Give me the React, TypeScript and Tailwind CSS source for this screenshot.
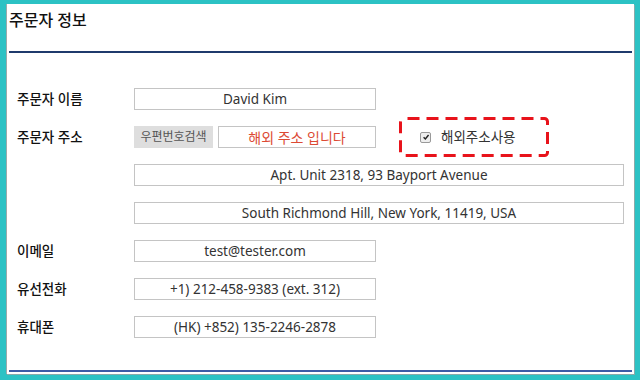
const font = { fontFamily: '"Noto Sans", "Noto Sans CJK KR", sans-serif' };

function Field({ value, className = '' }: { value: string; className?: string }) {
  return (
    <div
      className={`flex h-[22px] items-center justify-center border border-[#c4c4c4] bg-white text-[13.5px] text-[#333] ${className}`}
    >
      {value}
    </div>
  );
}

function Row({ label, children }: { label?: string; children: React.ReactNode }) {
  return (
    <div className="flex h-[22px] items-center">
      <div className="w-[117px] text-[13.5px] font-medium text-[#111]">{label}</div>
      {children}
    </div>
  );
}

export default function App() {
  return (
    <div className="h-[380px] w-[640px] bg-[#2cc2c4] pb-[6px] pl-[6px] pr-[6px] pt-[4px]" style={font}>
      <div className="flex h-full flex-col border-l border-[#9aa] bg-white px-[2px] pb-[2px] shadow-[1px_1px_0_#8aa]">
        {/* Title */}
        <div className="h-[47px] pt-[4px] text-[16px] font-medium text-[#111]">주문자 정보</div>
        <div className="h-[2px] bg-[#1f3a6c]" />

        {/* Form */}
        <div className="flex flex-1 flex-col gap-[16px] pl-[8px] pt-[35px]">
          <Row label="주문자 이름">
            <Field value="David Kim" className="w-[242px]" />
          </Row>

          <Row label="주문자 주소">
            <button className="h-[22px] w-[79px] bg-[#dedede] text-[12px] text-[#555]">우편번호검색</button>
            <div className="ml-[5px] flex h-[22px] w-[158px] items-center justify-center border border-[#c4c4c4] text-[14px] text-[#dc4a34]">
              해외 주소 입니다
            </div>
            <div className="relative -my-[9px] ml-[23px] flex h-[40px] w-[150px] items-center pl-[21px]">
              <svg className="absolute inset-0" width="150" height="40" viewBox="0 0 150 40">
                <rect
                  x="1.5"
                  y="1.5"
                  width="147"
                  height="37"
                  rx="3"
                  fill="none"
                  stroke="#e8131b"
                  strokeWidth="3"
                  strokeDasharray="12 7"
                  strokeDashoffset="-4"
                />
              </svg>
              <span className="flex h-[11px] w-[11px] items-center justify-center rounded-[2px] border border-[#999] bg-[#eee]">
                <svg viewBox="0 0 10 10" className="h-[8px] w-[8px]">
                  <path d="M2 5.2 L4.2 7.4 L8.2 2.6" fill="none" stroke="#222" strokeWidth="1.8" />
                </svg>
              </span>
              <span className="ml-[10px] text-[13.5px] text-[#333]">해외주소사용</span>
            </div>
          </Row>

          <Row>
            <Field value="Apt. Unit 2318, 93 Bayport Avenue" className="w-[490px]" />
          </Row>

          <Row>
            <Field value="South Richmond Hill, New York, 11419, USA" className="w-[490px]" />
          </Row>

          <Row label="이메일">
            <Field value="test@tester.com" className="w-[242px]" />
          </Row>

          <Row label="유선전화">
            <Field value="+1) 212-458-9383 (ext. 312)" className="w-[242px]" />
          </Row>

          <Row label="휴대폰">
            <Field value="(HK) +852) 135-2246-2878" className="w-[242px]" />
          </Row>
        </div>

        <div className="h-[2px] bg-[#3c5ba6]" />
      </div>
    </div>
  );
}
